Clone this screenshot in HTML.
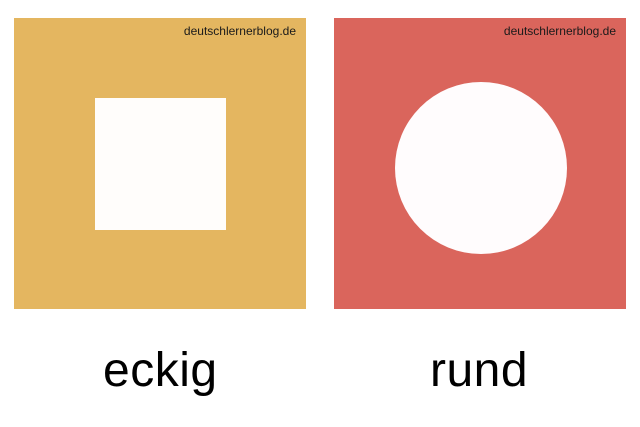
<!DOCTYPE html>
<html><head><meta charset="utf-8"><style>
html,body{margin:0;padding:0;background:#fff;width:640px;height:427px;overflow:hidden;position:relative;font-family:"Liberation Sans",sans-serif}
.p{position:absolute;top:18px;width:292px;height:291px}
.wm{position:absolute;top:6px;right:10px;font-size:12px;color:#1a1a1a}
.lbl{position:absolute;top:343px;font-size:48px;color:#000;line-height:56px;letter-spacing:0.5px}
</style></head><body>
<div class="p" style="left:14px;background:#e4b660"><div class="wm">deutschlernerblog.de</div>
<div style="position:absolute;left:81px;top:80px;width:131px;height:132px;background:#fffdfb"></div></div>
<div class="p" style="left:334px;background:#da655c"><div class="wm">deutschlernerblog.de</div>
<div style="position:absolute;left:61px;top:64px;width:172px;height:172px;border-radius:50%;background:#fffcfd"></div></div>
<div class="lbl" style="left:103px">eckig</div>
<div class="lbl" style="left:430px">rund</div>
</body></html>
